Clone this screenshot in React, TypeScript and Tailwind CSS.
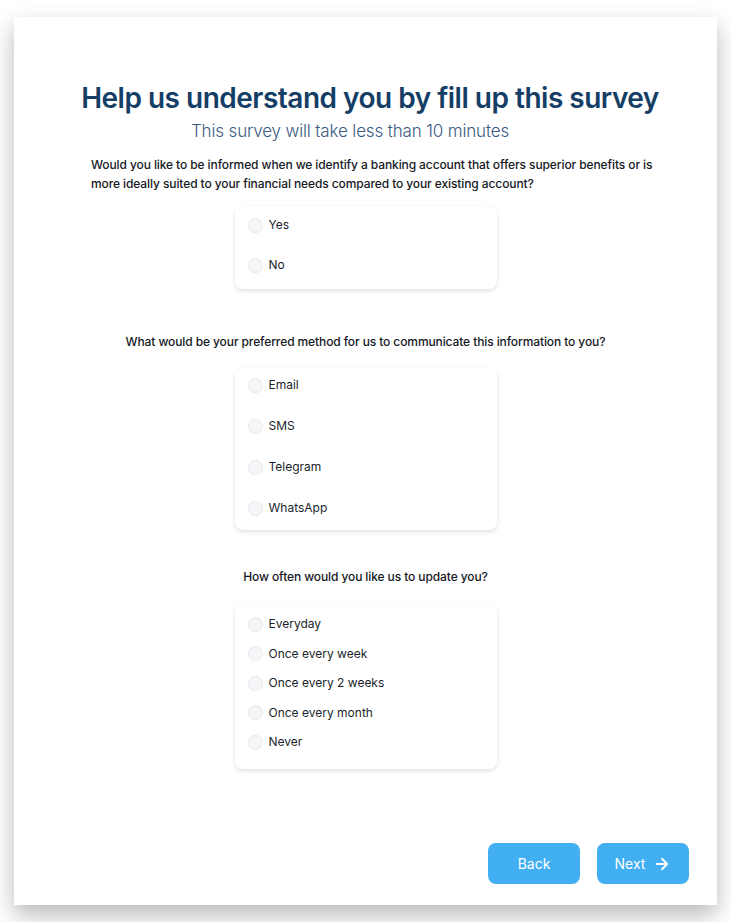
import React from "react";
import { ArrowRight } from "lucide-react";

function Radio({ label }: { label: string }) {
  return (
    <label className="flex items-center h-5 gap-[6px]">
      <span className="w-[15px] h-[15px] rounded-full bg-[#f5f6f8] border border-[#e6e8ec] shrink-0" />
      <span className="text-[12px] leading-5 text-[#1a1f2b]">{label}</span>
    </label>
  );
}

function Box({ options, cls }: { options: string[]; cls: string }) {
  return (
    <div className={`w-[262px] rounded-lg bg-white shadow-[0_2px_5px_rgba(0,0,0,0.12)] px-[13px] flex flex-col ${cls}`}>
      {options.map((o) => (
        <Radio key={o} label={o} />
      ))}
    </div>
  );
}

export default function App() {
  return (
    <div className="min-h-screen bg-white pt-[17px] px-[14px] pb-[17px]" style={{ fontFamily: "Inter, 'Noto Sans', sans-serif" }}>
      <div className="w-[703px] h-[888px] bg-white shadow-[0_10px_22px_rgba(0,0,0,0.28)] flex flex-col items-center pt-[64px]">
        <h1 className="text-[28px] leading-[34px] font-semibold text-[#153e66] pl-[9px] tracking-[-0.5px]">
          Help us understand you by fill up this survey
        </h1>
        <p className="mt-[4px] text-[17px] leading-6 font-light text-[#3a5b7f] pr-[31px] tracking-[-0.15px]">
          This survey will take less than 10 minutes
        </p>
        <p className="mt-[12px] w-[566px] ml-[17px] text-[12px] leading-[19px] text-[#15181e] font-medium tracking-[-0.1px]">
          Would you like to be informed when we identify a banking account that offers superior benefits or is more ideally suited to your financial needs compared to your existing account?
        </p>
        <Box options={["Yes", "No"]} cls="mt-[13px] pt-[9px] pb-[14px] gap-[20px]" />
        <p className="mt-[43px] text-[12px] leading-[19px] text-[#15181e] font-medium text-center tracking-[-0.1px]">
          What would be your preferred method for us to communicate this information to you?
        </p>
        <Box options={["Email", "SMS", "Telegram", "WhatsApp"]} cls="mt-[17px] pt-[7px] pb-[12px] gap-[21px]" />
        <p className="mt-[37px] text-[12px] leading-[19px] text-[#15181e] font-medium text-center tracking-[-0.1px]">
          How often would you like us to update you?
        </p>
        <Box
          options={["Everyday", "Once every week", "Once every 2 weeks", "Once every month", "Never"]}
          cls="mt-[18px] pt-[10px] pb-[17px] gap-[9.5px]"
        />
        <div className="mt-auto self-end flex gap-[17px] pr-[28px] pb-[21px]">
          <button className="w-[92px] h-[41px] rounded-lg bg-[#41aff1] text-white text-[14px] flex items-center justify-center">
            Back
          </button>
          <button className="w-[92px] h-[41px] rounded-lg bg-[#41aff1] text-white text-[14px] flex items-center justify-center gap-[8px]">
            Next
            <ArrowRight size={18} strokeWidth={2.5} />
          </button>
        </div>
      </div>
    </div>
  );
}
